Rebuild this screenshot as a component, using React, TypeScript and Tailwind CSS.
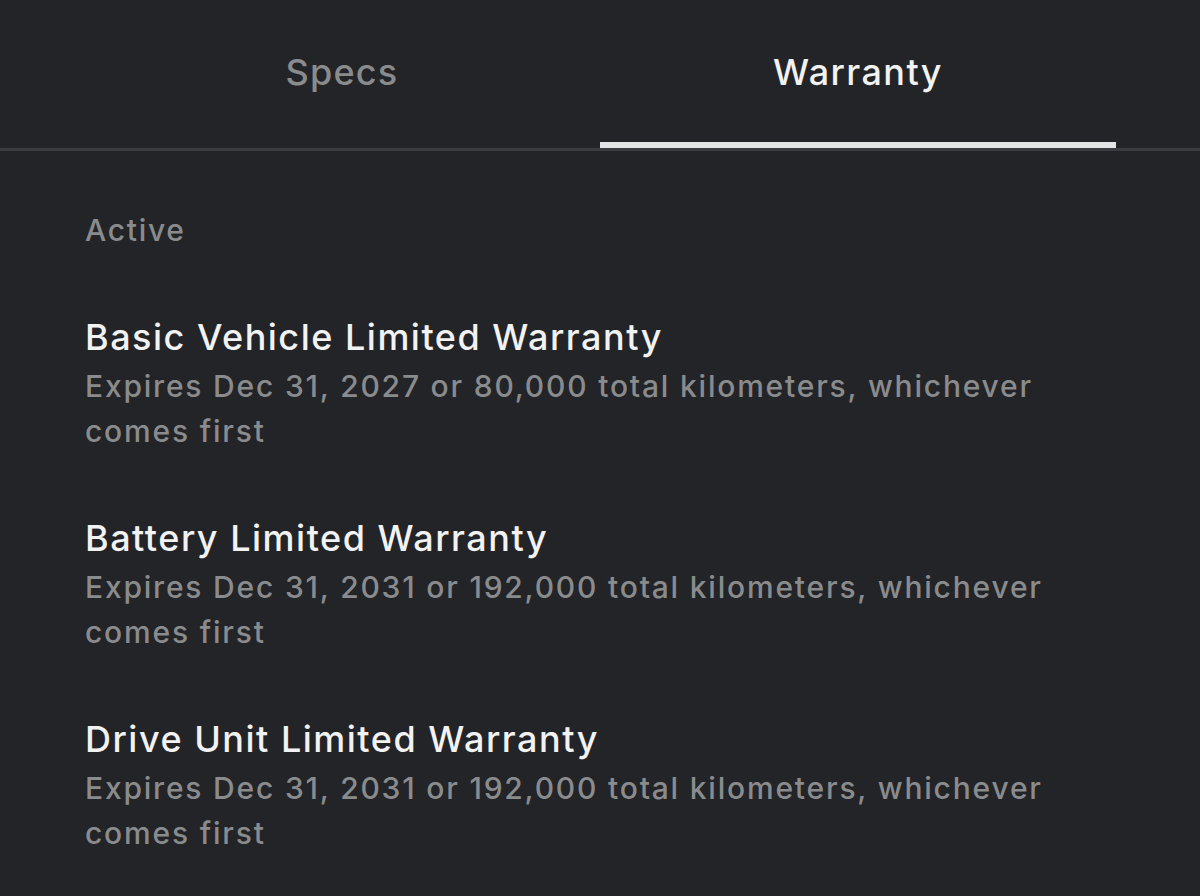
import React from "react";

const items = [
  {
    title: "Basic Vehicle Limited Warranty",
    desc: "Expires Dec 31, 2027 or 80,000 total kilometers, whichever comes first",
  },
  {
    title: "Battery Limited Warranty",
    desc: "Expires Dec 31, 2031 or 192,000 total kilometers, whichever comes first",
  },
  {
    title: "Drive Unit Limited Warranty",
    desc: "Expires Dec 31, 2031 or 192,000 total kilometers, whichever comes first",
  },
];

export default function App() {
  return (
    <div
      className="w-[1200px] h-[896px] bg-[#232427] overflow-hidden"
      style={{ fontFamily: "Inter, 'Noto Sans', sans-serif" }}
    >
      <div className="border-b-[3px] border-[#3a3b3e]">
        <div className="grid grid-cols-2 px-[84px]">
          <div className="h-[148px] flex items-start justify-center pt-[48px]">
            <span className="text-[36px] leading-[48px] font-medium text-[#8a8b8d] tracking-[1.2px]">Specs</span>
          </div>
          <div className="h-[148px] flex flex-col items-center pt-[48px] relative">
            <span className="text-[36px] leading-[48px] font-medium text-[#f2f2f2] tracking-[1.4px]">Warranty</span>
            <div className="absolute left-0 right-0 bottom-0 h-[6px] bg-[#e4e4e6]" />
          </div>
        </div>
      </div>
      <div className="px-[85px] pt-[59px]">
        <div className="text-[30px] leading-[40px] font-medium text-[#8a8b8d] tracking-[1.7px]">Active</div>
        <div className="mt-[64px] flex flex-col gap-[61px]">
          {items.map((it) => (
            <div key={it.title}>
              <div className="text-[36px] leading-[46px] font-medium text-[#f2f2f2] tracking-[1.5px] mb-[4px]">{it.title}</div>
              <div className="text-[30px] leading-[45px] font-medium text-[#8a8b8d] tracking-[1.8px]">{it.desc}</div>
            </div>
          ))}
        </div>
      </div>
    </div>
  );
}
